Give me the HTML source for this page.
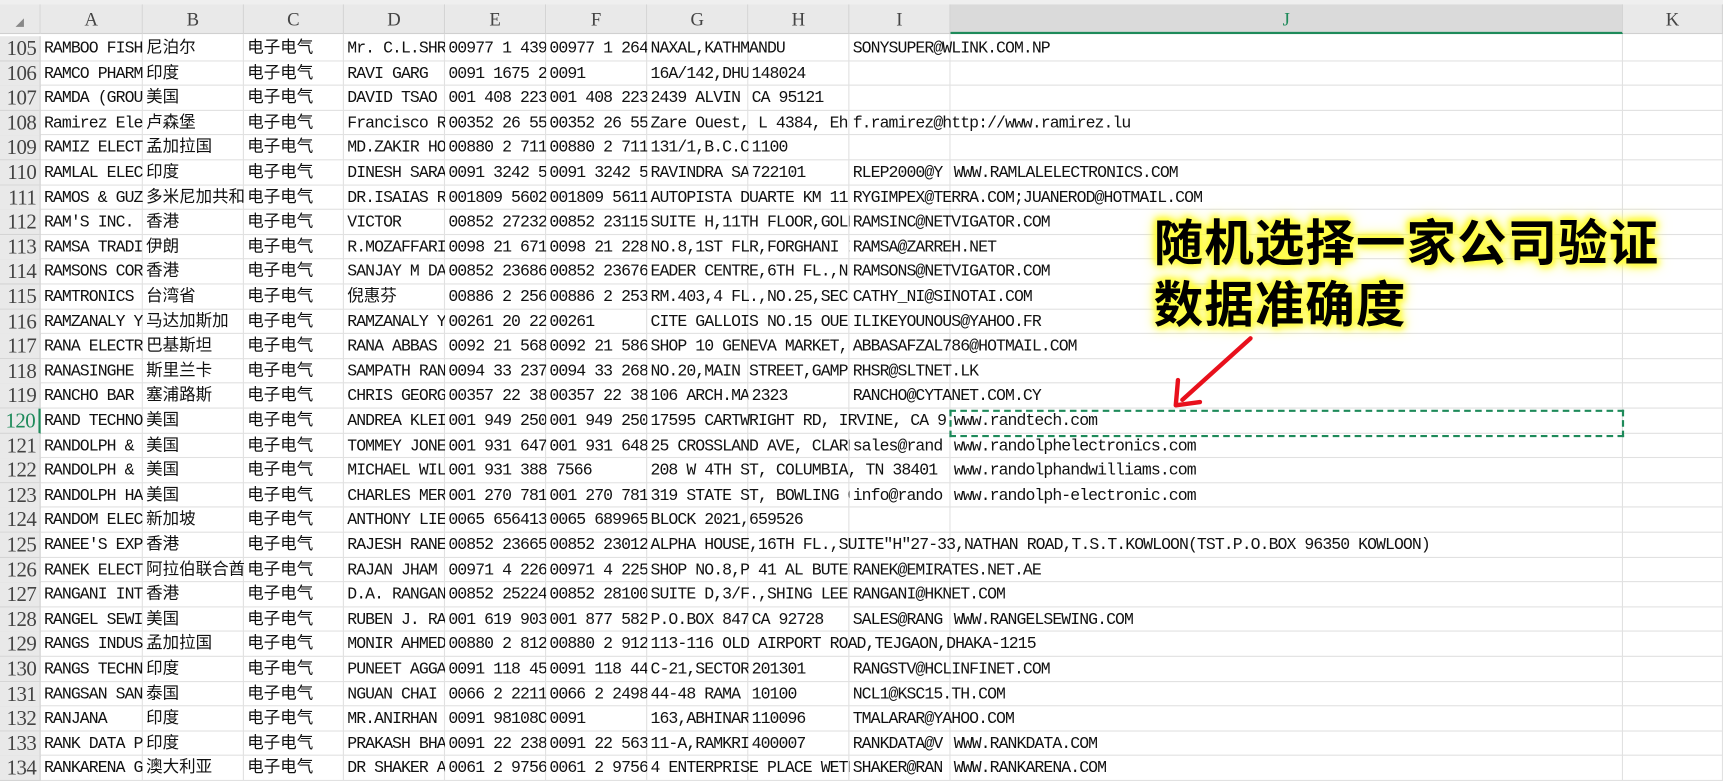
<!DOCTYPE html>
<html><head><meta charset="utf-8">
<style>
html,body{margin:0;padding:0;width:1723px;height:781px;overflow:hidden;background:#fff}
#w{position:absolute;left:0;top:0;width:1568px;height:711px;transform-origin:0 0;transform:scale(1.09885,1.09845);background:#fff;font-family:"Liberation Mono","Noto Sans CJK SC",monospace}
.h{position:absolute;top:4px;height:27px;background:#e9e9e9;border-right:1px solid #d4d4d4;border-bottom:1px solid #d0d0d0;box-sizing:border-box;text-align:center;font:17px/27px "Liberation Serif",serif;color:#444}
.rn{position:absolute;left:0;width:37px;background:#e9e9e9;border-bottom:1px solid #d4d4d4;border-right:1px solid #d0d0d0;box-sizing:border-box;text-align:right;padding-right:3px;font:19px/23px "Liberation Serif",serif;color:#444;letter-spacing:-0.5px}
.c{position:absolute;height:22px;line-height:23px;font-size:15px;white-space:nowrap;overflow:hidden;color:#111;padding-left:3px;box-sizing:border-box;letter-spacing:-0.85px}
.cj{font-family:"Liberation Mono","Noto Sans CJK SC",monospace;font-size:15px;letter-spacing:0}
.vl{position:absolute;top:31px;width:1px;height:680px;background:#e1e1e1}
.hl{position:absolute;left:37px;width:1531px;height:1px;background:#e1e1e1}
#ann{position:absolute;left:1050px;top:190px;font:bold 45px/56px "Noto Sans CJK SC",sans-serif;color:#000;letter-spacing:1px;text-shadow:0 0 6px #ffff40,0 0 10px #ffff40,0 0 14px #fffa40,2px 2px 6px #fffa40,-2px -2px 6px #fffa40}
</style></head><body><div id="w"></div>
<script>
var W=document.getElementById('w');
var cols=[37,130,222,313,405,497,589,681,773,865,1477,1568];
var L="ABCDEFGHIJK";
var h='<div style="position:absolute;left:0;top:0;width:1568px;height:4px;background:#efefef"></div>';
h+='<div class="h" style="left:0;width:37px"><span style="font-size:10px;color:#888">&#9698;</span></div>';
for(var i=0;i<11;i++){var st='left:'+cols[i]+'px;width:'+(cols[i+1]-cols[i])+'px;';
 if(i==9)st+='background:#dadada;color:#1e8a5a;border-bottom:2px solid #1e8a5a;';
 h+='<div class="h" style="'+st+'">'+L[i]+'</div>';}
var rows=[
["RAMBOO FISH","尼泊尔","电子电气","Mr. C.L.SHR","00977 1 439","00977 1 264","NAXAL,KATHMANDU","","SONYSUPER@WLINK.COM.NP",""],
["RAMCO PHARM","印度","电子电气","RAVI GARG","0091 1675 2","0091","16A/142,DHU","148024","",""],
["RAMDA (GROU","美国","电子电气","DAVID TSAO","001 408 223","001 408 223","2439 ALVIN","CA 95121","",""],
["Ramirez Ele","卢森堡","电子电气","Francisco R","00352 26 55","00352 26 55","Zare Ouest, L 4384, Eh","","f.ramirez@http://www.ramirez.lu",""],
["RAMIZ ELECT","孟加拉国","电子电气","MD.ZAKIR HO","00880 2 711","00880 2 711","131/1,B.C.C","1100","",""],
["RAMLAL ELEC","印度","电子电气","DINESH SARA","0091 3242 5","0091 3242 5","RAVINDRA SA","722101","RLEP2000@Y","WWW.RAMLALELECTRONICS.COM"],
["RAMOS & GUZ","多米尼加共和","电子电气","DR.ISAIAS R","001809 5602","001809 5611","AUTOPISTA DUARTE KM 11","","RYGIMPEX@TERRA.COM;JUANEROD@HOTMAIL.COM",""],
["RAM'S INC.","香港","电子电气","VICTOR","00852 27232","00852 23115","SUITE H,11TH FLOOR,GOLD","","RAMSINC@NETVIGATOR.COM",""],
["RAMSA TRADI","伊朗","电子电气","R.MOZAFFARI","0098 21 671","0098 21 228","NO.8,1ST FLR,FORGHANI I","","RAMSA@ZARREH.NET",""],
["RAMSONS COR","香港","电子电气","SANJAY M DA","00852 23686","00852 23676","EADER CENTRE,6TH FL.,N","","RAMSONS@NETVIGATOR.COM",""],
["RAMTRONICS","台湾省","电子电气","倪惠芬","00886 2 256","00886 2 253","RM.403,4 FL.,NO.25,SEC.","","CATHY_NI@SINOTAI.COM",""],
["RAMZANALY Y","马达加斯加","电子电气","RAMZANALY Y","00261 20 22","00261","CITE GALLOIS NO.15 OUE","","ILIKEYOUNOUS@YAHOO.FR",""],
["RANA ELECTR","巴基斯坦","电子电气","RANA ABBAS","0092 21 568","0092 21 586","SHOP 10 GENEVA MARKET,","","ABBASAFZAL786@HOTMAIL.COM",""],
["RANASINGHE","斯里兰卡","电子电气","SAMPATH RAN","0094 33 237","0094 33 268","NO.20,MAIN STREET,GAMP.","","RHSR@SLTNET.LK",""],
["RANCHO BAR","塞浦路斯","电子电气","CHRIS GEORG","00357 22 38","00357 22 38","106 ARCH.MA","2323","RANCHO@CYTANET.COM.CY",""],
["RAND TECHNO","美国","电子电气","ANDREA KLEI","001 949 250","001 949 250","17595 CARTWRIGHT RD, IRVINE, CA 9","","","www.randtech.com"],
["RANDOLPH &","美国","电子电气","TOMMEY JONE","001 931 647","001 931 648","25 CROSSLAND AVE, CLARK","","sales@rand","www.randolphelectronics.com"],
["RANDOLPH &","美国","电子电气","MICHAEL WIL","001 931 388 7566","","208 W 4TH ST, COLUMBIA, TN 38401","","","www.randolphandwilliams.com"],
["RANDOLPH HA","美国","电子电气","CHARLES MER","001 270 781","001 270 781","319 STATE ST, BOWLING G","","info@rando","www.randolph-electronic.com"],
["RANDOM ELEC","新加坡","电子电气","ANTHONY LIE","0065 656413","0065 689965","BLOCK 2021,659526","","",""],
["RANEE'S EXP","香港","电子电气","RAJESH RANE","00852 23665","00852 23012","ALPHA HOUSE,16TH FL.,SUITE\"H\"27-33,NATHAN ROAD,T.S.T.KOWLOON(TST.P.O.BOX 96350 KOWLOON)","","",""],
["RANEK ELECT","阿拉伯联合酋","电子电气","RAJAN JHAM","00971 4 226","00971 4 225","SHOP NO.8,P 41 AL BUTEI","","RANEK@EMIRATES.NET.AE",""],
["RANGANI INT","香港","电子电气","D.A. RANGAN","00852 25224","00852 28100","SUITE D,3/F.,SHING LEE","","RANGANI@HKNET.COM",""],
["RANGEL SEWI","美国","电子电气","RUBEN J. RA","001 619 903","001 877 582","P.O.BOX 847","CA 92728","SALES@RANG","WWW.RANGELSEWING.COM"],
["RANGS INDUS","孟加拉国","电子电气","MONIR AHMED","00880 2 812","00880 2 912","113-116 OLD AIRPORT ROAD,TEJGAON,DHAKA-1215","","",""],
["RANGS TECHN","印度","电子电气","PUNEET AGGA","0091 118 45","0091 118 44","C-21,SECTOR","201301","RANGSTV@HCLINFINET.COM",""],
["RANGSAN SAN","泰国","电子电气","NGUAN CHAI","0066 2 2211","0066 2 2498","44-48 RAMA","10100","NCL1@KSC15.TH.COM",""],
["RANJANA","印度","电子电气","MR.ANIRHAN","0091 98108C","0091","163,ABHINAR","110096","TMALARAR@YAHOO.COM",""],
["RANK DATA P","印度","电子电气","PRAKASH BHA","0091 22 238","0091 22 563","11-A,RAMKRI","400007","RANKDATA@V","WWW.RANKDATA.COM"],
["RANKARENA G","澳大利亚","电子电气","DR SHAKER A","0061 2 9756","0061 2 9756","4 ENTERPRISE PLACE WETH","","SHAKER@RAN","WWW.RANKARENA.COM"]
];
var y0=33,rh=22.6;
for(var i=0;i<11;i++)h+='<div class="vl" style="left:'+(cols[i+1]-1)+'px"></div>';
for(var r=0;r<rows.length;r++){var y=y0+r*rh;
 h+='<div class="hl" style="top:'+(y+rh-1).toFixed(1)+'px"></div>';
 var n=105+r;
 h+='<div class="rn" style="top:'+y.toFixed(1)+'px;height:'+(rh+0.5).toFixed(1)+'px;'+(n==120?'color:#1e8a5a;border-right:2px solid #1e8a5a;':'')+'">'+n+'</div>';
 var R=rows[r];
 for(var c=0;c<10;c++){if(!R[c])continue;
  var e=c+1;while(e<10&&!R[e])e++;
  var wd=cols[e]-cols[c]; if(e==10&&c>=6)wd=cols[11]-cols[c];
  var cj=/[\u4e00-\u9fff]/.test(R[c]);
  h+='<div class="c'+(cj?' cj':'')+'" style="left:'+cols[c]+'px;top:'+y.toFixed(1)+'px;width:'+wd+'px">'+R[c].replace(/&/g,'&amp;')+'</div>';}
}
h+='<div style="position:absolute;left:864px;top:373px;width:614px;height:25px;border:2px dashed #1e8a5a;box-sizing:border-box"></div>';
h+='<div id="ann">随机选择一家公司验证<br>数据准确度</div>';
h+='<svg style="position:absolute;left:0;top:0" width="1568" height="711"><line x1="1138" y1="308" x2="1076" y2="364" stroke="#e8101c" stroke-width="4" stroke-linecap="round"/><polyline points="1072,346 1070,369 1092,366" fill="none" stroke="#e8101c" stroke-width="4" stroke-linecap="round" stroke-linejoin="round"/></svg>';
W.innerHTML=h;
</script>
</body></html>
